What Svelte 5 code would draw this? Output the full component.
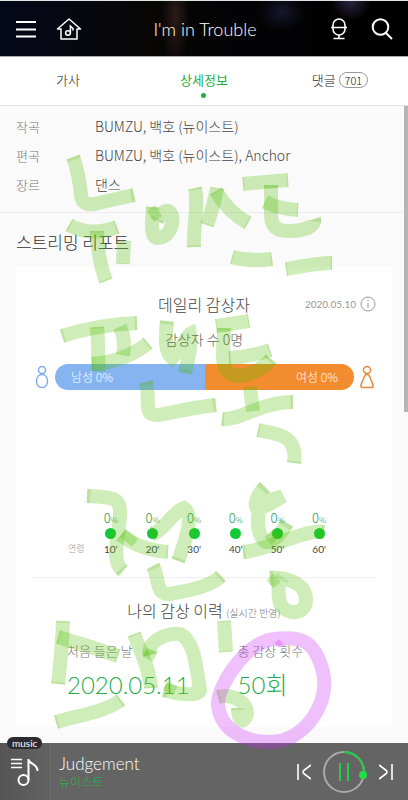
<script lang="ts">
  interface Credit {
    label: string;
    value: string;
  }

  const credits: Credit[] = [
    { label: '작곡', value: 'BUMZU, 백호 (뉴이스트)' },
    { label: '편곡', value: 'BUMZU, 백호 (뉴이스트), Anchor' },
    { label: '장르', value: '댄스' },
  ];

  const ages = [10, 20, 30, 40, 50, 60];

  let male = 0;
  let female = 0;
  let activeTab = 'detail';

  $: total = male + female;
  $: maleShare = total ? (male / total) * 100 : 50;

  // Marker strokes, one path per pen movement
  const strokes = [
    'M73 157C78 170 80 185 81 195Q82 206 94 204L134 195',
    'M69 225Q90 237 117 227',
    'M97 231C97 250 100 265 106 281',
    'M124 241L123 264',
    'M153 207C152 222 150 238 158 238C168 238 174 226 172 216C170 208 162 209 157 221',
    'M195 188C199 205 193 225 194 247',
    'M217 188Q214 205 207 225',
    'M216 191Q228 212 248 223',
    'M243 184L288 180',
    'M265 202Q280 209 298 210',
    'M271 185V216C272 230 280 231 290 231C305 231 316 226 314 219',
    'M232 257Q250 262 272 259',
    'M286 269C300 267 315 263 332 263',
    'M62 336Q95 325 137 323',
    'M97 327Q99 350 98 371',
    'M120 327Q126 340 123 355',
    'M92 364Q125 362 148 343',
    'M167 321C165 340 165 352 172 358C180 350 188 335 190 334C192 345 188 360 185 373',
    'M146 382C151 400 142 416 158 415C175 412 190 408 216 405',
    'M216 326Q230 324 249 321',
    'M229 358Q250 357 270 350',
    'M224 328C224 345 220 365 228 372C240 382 262 370 271 359',
    'M250 387L253 411',
    'M222 419C240 421 260 402 293 402',
    'M258 430C275 434 298 433 294 463',
    'M87 496C115 497 121 498 120 515C119 540 110 560 123 571',
    'M121 535Q140 550 168 552',
    'M152 534C165 530 172 512 184 508C194 515 186 540 178 561',
    'M153 566C160 580 155 595 170 594C190 590 210 587 221 576',
    'M265 487C258 494 253 504 257 508C266 508 278 499 283 496C275 499 268 500 262 502C256 515 256 535 266 542C274 542 282 532 287 523',
    'M243 552C270 550 300 530 324 532',
    'M270 578C280 577 306 580 306 600C306 618 280 615 279 598C278 588 278 584 283 577',
    'M63 621Q62 650 58 684',
    'M58 637C75 642 95 648 118 656',
    'M56 722C80 715 105 712 121 700',
    'M134 634C140 650 150 670 151 688',
    'M150 655C146 640 170 632 180 634C194 640 196 665 200 690C200 696 180 695 164 690',
    'M224 621L226 652',
    'M218 697C233 693 247 702 247 714C244 724 238 722 238 708',
  ];
  // Spots where a stroke crosses itself
  const crossings = [
    'M151 208L158 219',
    'M123 533L135 543',
    'M268 541L276 533',
    'M270 577L277 585',
    'M145 652L155 657',
    'M165 685L175 691',
  ];
  const ring =
    'M281 639C250 635 217 685 218 705C221 735 255 745 280 741C305 735 330 705 323 672C315 640 300 636 277 639';
</script>

<div class="page">
  <header>
    <div class="actions">
      <button aria-label="Menu">
        <svg width="20" height="18" viewBox="0 0 20 18"><path d="M0 2H20M0 9.500H20M0 16.500H20" stroke-width="2" /></svg>
      </button>
      <button aria-label="Home">
        <svg width="26" height="24" viewBox="0 0 26 24">
          <path d="M5 12V22H21V12H24.500L13 2 1.500 12Z" stroke-width="1.500" stroke-linejoin="round" />
          <ellipse cx="12" cy="16" rx="2.400" ry="2.200" stroke-width="1.500" />
          <path d="M14.400 16V9L17 11.500V13.500" stroke-width="1.500" />
        </svg>
      </button>
    </div>
    <h1>I'm in Trouble</h1>
    <div class="actions right">
      <button aria-label="Voice search">
        <svg width="18" height="24" viewBox="0 0 18 24">
          <rect x="3" y="2" width="12" height="16" rx="6" stroke-width="1.600" />
          <path d="M1 10.500H17M9 18V21.500M3.500 21.500H14.500" stroke-width="1.600" />
        </svg>
      </button>
      <button aria-label="Search">
        <svg width="24" height="24" viewBox="0 0 24 24">
          <circle cx="10.500" cy="10" r="7.800" stroke-width="2" />
          <path d="M16 16L22 22" stroke-width="2" />
        </svg>
      </button>
    </div>
  </header>

  <nav>
    <button class:active={activeTab === 'lyrics'} on:click={() => (activeTab = 'lyrics')}>가사</button>
    <button class:active={activeTab === 'detail'} on:click={() => (activeTab = 'detail')}>상세정보</button>
    <button class:active={activeTab === 'comments'} on:click={() => (activeTab = 'comments')}>
      댓글 <span class="count">701</span>
    </button>
  </nav>

  <main>
    <dl class="credits">
      {#each credits as credit}
        <div>
          <dt>{credit.label}</dt>
          <dd>{credit.value}</dd>
        </div>
      {/each}
    </dl>

    <h2>스트리밍 리포트</h2>

    <section class="card">
      <div class="card-head">
        <h3>데일리 감상자</h3>
        <span class="date">
          2020.05.10
          <svg width="16" height="16" viewBox="0 0 16 16">
            <circle cx="8" cy="8" r="7" />
            <path d="M8 4V5.500M8 7V12" />
          </svg>
        </span>
      </div>
      <p class="listeners">감상자 수 {total}명</p>

      <div class="gender">
        <svg class="man" width="14" height="24" viewBox="0 0 14 24">
          <circle cx="7" cy="5" r="3.500" />
          <path d="M7 9.500C3.500 9.500 1.500 12.500 1.500 16S3.500 22.500 7 22.500 12.500 19.500 12.500 16 10.500 9.500 7 9.500Z" />
        </svg>
        <div class="bar">
          <span class="male" style="width: {maleShare}%">남성 {male}%</span>
          <span class="female">여성 {female}%</span>
        </div>
        <svg class="woman" width="14" height="24" viewBox="0 0 14 24">
          <circle cx="7" cy="5" r="3.500" />
          <path d="M7 9.500C4.500 9.500 4 12 3 15 1.500 19 .5 19.500 1 21.500 1.200 22.500 2 22.500 3 22.500H11C12 22.500 12.800 22.500 13 21.500 13.500 19.500 12.500 19 11 15 10 12 9.500 9.500 7 9.500Z" />
        </svg>
      </div>

      <div class="ages">
        <span class="ages-label">연령</span>
        <ul>
          {#each ages as age}
            <li>
              <span class="percent">0<small>%</small></span>
              <i class="dot"></i>
              <span class="age">{age}'</span>
            </li>
          {/each}
        </ul>
      </div>

      <div class="history">
        <h3>나의 감상 이력 <small>(실시간 반영)</small></h3>
        <div class="stats">
          <div>
            <p>처음 들은 날</p>
            <strong>2020.05.11</strong>
          </div>
          <div>
            <p>총 감상 횟수</p>
            <strong>50회</strong>
          </div>
        </div>
      </div>
    </section>
    <div class="scrollbar"></div>
  </main>

  <footer>
    <div class="thumb">
      <span class="badge">music</span>
      <svg width="28" height="30" viewBox="0 0 28 30">
        <path d="M0 2.500H11M0 6.500H11M0 10.500H11" stroke-width="1.300" />
        <circle cx="12.500" cy="23" r="5" stroke-width="2" />
        <path d="M17.500 23V2C18 8 26.500 6 26.500 14" stroke-width="2" />
      </svg>
    </div>
    <div class="track">
      <p class="title">Judgement</p>
      <p class="artist">뉴이스트</p>
    </div>
    <div class="controls">
      <button aria-label="Previous">
        <svg width="14" height="16" viewBox="0 0 14 16"><path d="M1 0V16M14 1L8 5.500Q4 8 8 10.500L14 15" stroke-width="1.600" /></svg>
      </button>
      <button aria-label="Pause">
        <svg width="46" height="46" viewBox="0 0 46 46">
          <circle cx="22" cy="23" r="20" stroke="#a9a9a9" stroke-width="2" />
          <path d="M22 3A20 20 0 0 1 41.800 26" stroke="#22ce45" stroke-width="2" />
          <circle cx="41" cy="26" r="4" fill="#22dd46" stroke="none" />
          <path d="M18 14V32M26 14V32" stroke="#22ce45" stroke-width="2" />
        </svg>
      </button>
      <button aria-label="Next">
        <svg width="14" height="16" viewBox="0 0 14 16"><path d="M13 0V16M0 1L6 5.500Q10 8 6 10.500L0 15" stroke-width="1.600" /></svg>
      </button>
    </div>
  </footer>

  <svg class="marker" viewBox="0 0 408 800" aria-hidden="true">
    <g class="green">
      {#each strokes as d}
        <path {d} />
        <path class="ends" {d} pathLength="100" />
      {/each}
      {#each crossings as d}
        <path class="crossing" {d} />
      {/each}
    </g>
    <path class="purple" d={ring} />
    <path class="purple tip" d="M277 641L281 646" />
  </svg>
</div>

<style>
  :global(body) {
    margin: 0;
    background: #fafafa;
  }

  .page {
    position: relative;
    display: flex;
    flex-direction: column;
    min-height: 100vh;
    font-family: 'Noto Sans CJK KR', sans-serif;
    font-weight: 300;
    color: #444;
  }

  h1, h2, h3, p, dl, dd, ul {
    margin: 0;
    padding: 0;
    font-weight: 300;
  }

  button {
    padding: 0;
    border: 0;
    background: none;
    font: inherit;
    color: inherit;
    cursor: pointer;
  }

  svg {
    display: block;
    fill: none;
    stroke: currentColor;
  }

  header {
    display: grid;
    grid-template-columns: 1fr auto 1fr;
    align-items: center;
    height: 56px;
    box-sizing: border-box;
    padding: 0 14px 0 16px;
    border-top: 1px solid #dfe5e5;
    background:
      radial-gradient(ellipse 14px 50px at 43% 30%, #2c1a18, transparent),
      radial-gradient(ellipse 24px 20px at 69% 20%, #16162c, transparent),
      radial-gradient(ellipse 20px 20px at 86% 0, #2c2340, transparent),
      linear-gradient(90deg, #05081a, #080706 35%, #030204 60%, #000);
    color: #fff;
  }

  .actions {
    display: flex;
    align-items: center;
    gap: 20px;
  }

  .right {
    justify-content: flex-end;
    gap: 22px;
  }

  h1 {
    font-family: Lato, sans-serif;
    font-size: 18px;
  }

  nav {
    display: grid;
    grid-template-columns: repeat(3, 1fr);
    height: 48px;
    border-top: 1px solid #aaa;
    border-bottom: 1px solid #e4e4e4;
    background: #fff;
  }

  nav button {
    position: relative;
    padding-bottom: 4px;
    font-size: 13px;
    color: #222;
  }

  nav .active {
    font-weight: 400;
    color: #1faf43;
  }

  nav .active::after {
    content: '';
    position: absolute;
    left: 50%;
    bottom: 7px;
    width: 5px;
    height: 5px;
    margin-left: -3px;
    border-radius: 50%;
    background: #1faf43;
  }

  .count {
    display: inline-block;
    padding: 0 5px;
    border: 1px solid #999;
    border-radius: 9px;
    font-size: 11px;
    line-height: 14px;
  }

  main {
    position: relative;
    flex: 1;
    padding-bottom: 16px;
  }

  .credits {
    padding: 6px 16px 13px;
    border-bottom: 1px solid #ececec;
    font-size: 13px;
    line-height: 29px;
  }

  .credits div {
    display: flex;
  }

  dt {
    width: 79px;
    color: #777;
  }

  dd {
    font-size: 14px;
  }

  h2 {
    padding: 16px 16px 12px;
    font-size: 17px;
    line-height: 26px;
    color: #333;
  }

  .card {
    margin: 0 16px;
    padding: 24px 16px;
    background: #fff;
  }

  .card-head {
    display: grid;
    grid-template-columns: 1fr auto 1fr;
    align-items: center;
  }

  h3 {
    grid-column: 2;
    font-size: 16px;
    line-height: 26px;
    text-align: center;
  }

  .date {
    display: flex;
    align-items: center;
    justify-content: flex-end;
    gap: 4px;
    font-family: Lato, sans-serif;
    font-size: 10px;
    font-weight: 400;
    color: #999;
  }

  .listeners {
    margin-top: 10px;
    font-size: 14px;
    line-height: 24px;
    text-align: center;
    color: #666;
  }

  .gender {
    display: flex;
    align-items: center;
    gap: 6px;
    margin: 13px 2px 0 3px;
  }

  .gender svg {
    flex: none;
    stroke-width: 1.500;
  }

  .man {
    color: #7fadec;
  }

  .woman {
    color: #e58a3c;
  }

  .bar {
    display: flex;
    flex: 1;
    overflow: hidden;
    border-radius: 13px;
    font-size: 12px;
    line-height: 26px;
    color: #fff;
  }

  .bar span {
    box-sizing: border-box;
    padding: 0 16px;
  }

  .male {
    background: #85b4f1;
  }

  .female {
    flex: 1;
    background: #f28c2e;
    text-align: right;
  }

  .ages {
    display: flex;
    align-items: flex-end;
    margin: 120px 36px 0;
    font-size: 9px;
    line-height: 16px;
  }

  .ages-label {
    width: 22px;
    color: #999;
    white-space: nowrap;
  }

  ul {
    display: grid;
    flex: 1;
    grid-template-columns: repeat(6, 1fr);
    list-style: none;
  }

  li {
    display: flex;
    flex-direction: column;
    align-items: center;
  }

  .percent {
    font-size: 13px;
    color: #239c48;
  }

  .percent small {
    font-size: 8px;
  }

  .dot {
    width: 11px;
    height: 11px;
    margin-bottom: 2px;
    border-radius: 50%;
    background: #14c838;
  }

  .age {
    font-family: Lato, sans-serif;
    font-size: 10px;
    font-weight: 400;
  }

  .history {
    margin-top: 20px;
    padding-top: 19px;
    border-top: 1px solid #efefef;
  }

  .history small {
    font-size: 10px;
    color: #777;
  }

  .stats {
    display: flex;
    gap: 48px;
    margin: 12px 35px 0;
    font-size: 13px;
    line-height: 26px;
    color: #777;
  }

  strong {
    display: block;
    margin-top: 3px;
    font-family: Lato, 'Noto Sans CJK KR', sans-serif;
    font-size: 24px;
    font-weight: 300;
    line-height: 36px;
    color: #1fae4b;
  }

  .scrollbar {
    position: absolute;
    top: 0;
    right: 0;
    width: 4px;
    height: 48%;
    background: #b5b5b5;
  }

  footer {
    display: flex;
    align-items: center;
    height: 57px;
    background: #646464;
    color: #fff;
  }

  .thumb {
    position: relative;
    display: flex;
    align-items: center;
    justify-content: center;
    width: 50px;
    height: 100%;
    border-right: 1px solid #6e6e6e;
    background: linear-gradient(90deg, #555, #626262);
  }

  .badge {
    position: absolute;
    top: -6px;
    left: 7px;
    padding: 0 5px;
    border-radius: 6px;
    background: #2c2c2e;
    font-family: Lato, sans-serif;
    font-size: 10px;
    font-weight: 400;
    line-height: 12px;
  }

  .track {
    flex: 1;
    padding-left: 8px;
  }

  .title {
    font-family: Lato, sans-serif;
    font-size: 17px;
    line-height: 20px;
  }

  .artist {
    font-size: 12px;
    line-height: 16px;
    color: #25bd4b;
  }

  .controls {
    display: flex;
    align-items: center;
    gap: 11px;
    padding-right: 15px;
  }

  .marker {
    position: absolute;
    top: 0;
    left: 0;
    width: 100%;
    pointer-events: none;
  }

  .green path {
    stroke: rgba(80, 190, 0, 0.28);
    stroke-width: 14;
  }

  .green .ends {
    stroke: rgba(80, 170, 0, 0.15);
    stroke-dasharray: 3 94 3 0;
  }

  .green .crossing {
    stroke: rgba(80, 190, 0, 0.28);
    stroke-width: 10;
  }

  .purple {
    stroke: rgba(205, 45, 248, 0.3);
    stroke-width: 14;
  }

  .tip {
    stroke-width: 6;
  }
</style>
